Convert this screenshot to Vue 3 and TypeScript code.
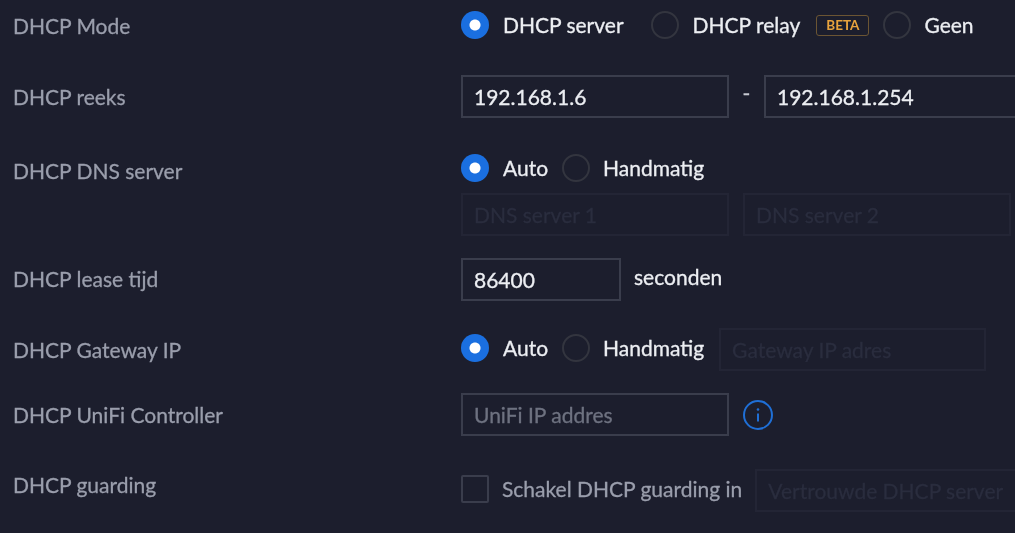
<template>
  <div class="settings">
    <div class="row row-mode">
      <div class="label">DHCP Mode</div>
      <div class="controls radios">
        <label class="radio checked"><i></i><span>DHCP server</span></label>
        <label class="radio gap-relay"><i></i><span>DHCP relay</span></label>
        <span class="beta">BETA</span>
        <label class="radio"><i></i><span>Geen</span></label>
      </div>
    </div>

    <div class="row row-range">
      <div class="label">DHCP reeks</div>
      <div class="controls inline">
        <input class="field" value="192.168.1.6" />
        <span class="dash">-</span>
        <input class="field" value="192.168.1.254" />
      </div>
    </div>

    <div class="row row-dns">
      <div class="label">DHCP DNS server</div>
      <div class="controls">
        <div class="radios">
          <label class="radio checked"><i></i><span>Auto</span></label>
          <label class="radio tight"><i></i><span>Handmatig</span></label>
        </div>
        <div class="dns-fields">
          <input class="field off" placeholder="DNS server 1" disabled />
          <input class="field off" placeholder="DNS server 2" disabled />
        </div>
      </div>
    </div>

    <div class="row row-lease">
      <div class="label">DHCP lease tijd</div>
      <div class="controls inline">
        <input class="field short" value="86400" />
        <span class="unit">seconden</span>
      </div>
    </div>

    <div class="row row-gateway">
      <div class="label">DHCP Gateway IP</div>
      <div class="controls radios">
        <label class="radio checked"><i></i><span>Auto</span></label>
        <label class="radio tight"><i></i><span>Handmatig</span></label>
        <input class="field off gateway" placeholder="Gateway IP adres" disabled />
      </div>
    </div>

    <div class="row row-controller">
      <div class="label">DHCP UniFi Controller</div>
      <div class="controls inline">
        <input class="field" placeholder="UniFi IP addres" />
        <svg class="info" width="32" height="32" viewBox="0 0 32 32" fill="none">
          <circle cx="16" cy="16" r="14" stroke="#1f6fd6" stroke-width="2" />
          <circle cx="16" cy="10.5" r="1.3" fill="#1f6fd6" />
          <path d="M16 14.5v8" stroke="#1f6fd6" stroke-width="2" />
        </svg>
      </div>
    </div>

    <div class="row row-guard">
      <div class="label">DHCP guarding</div>
      <div class="controls radios">
        <label class="check"><i></i><span>Schakel DHCP guarding in</span></label>
        <input class="field off trusted" placeholder="Vertrouwde DHCP server" disabled />
      </div>
    </div>
  </div>
</template>

<script setup lang="ts">
</script>

<style>
html,
body {
  background: #1c1e2d;
  overflow: hidden;
}
</style>

<style scoped>
.settings {
  width: 1015px;
  height: 533px;
  overflow: hidden;
  box-sizing: border-box;
  padding: 4px 0 0 13px;
  background: #1c1e2d;
  font-family: Lato, "Open Sans", sans-serif;
  font-size: 21px;
  -webkit-text-stroke: 0.3px currentColor;
  color: #eceef2;
  filter: blur(0.6px);
}

.row {
  display: grid;
  grid-template-columns: 448px 600px;
  align-items: start;
}

.label {
  color: #9a9eac;
  line-height: 28px;
}

.row-mode { height: 71px; }
.row-mode .label { padding-top: 8px; }
.row-mode .controls { padding-top: 7px; }
.row-range { height: 79px; }
.row-range .label { padding-top: 8px; }
.row-dns { height: 104px; }
.row-dns .label { padding-top: 3px; }
.row-lease { height: 70px; }
.row-lease .label { padding-top: 7px; }
.row-gateway { height: 65px; }
.row-gateway .label { padding-top: 8px; }
.row-gateway .radio { margin-bottom: 4px; }
.row-controller { height: 77px; }
.row-controller .label { padding-top: 8px; }
.row-guard { margin-top: -1px; }
.row-guard .label { padding-top: 2px; }

.radios {
  display: flex;
  align-items: center;
}

.inline {
  display: flex;
  align-items: center;
}

.radio,
.check {
  display: flex;
  align-items: center;
  line-height: 28px;
  white-space: nowrap;
}

.radio i {
  box-sizing: border-box;
  width: 28px;
  height: 28px;
  margin-right: 13px;
  border: 2px solid #33353f;
  border-radius: 50%;
}

.radio.checked i {
  margin-right: 14px;
  border: 0;
  background: radial-gradient(circle, #fff 0 5px, #1a6fe0 6px);
}

.gap-relay { margin-left: 27px; }
.gap-relay i { margin-right: 14px; }
.tight { margin-left: 14px; }

.beta {
  box-sizing: border-box;
  height: 21px;
  margin: 0 14px 0 16px;
  padding: 0 9px;
  border: 1px solid #6b5533;
  border-radius: 3px;
  color: #e8a33d;
  font-size: 13.5px;
  font-weight: 700;
  line-height: 19px;
  -webkit-text-stroke: 0;
}

.field {
  box-sizing: border-box;
  flex: none;
  width: 268px;
  height: 43px;
  padding: 0 11px;
  border: 2px solid #3a3d4c;
  border-radius: 0;
  outline: none;
  background: transparent;
  color: #eceef2;
  font: inherit;
}

.field::placeholder {
  color: #6e7280;
  opacity: 1;
}

.field.off {
  border-color: #232535;
}

.field.off::placeholder {
  color: #2a2d3e;
}

.dash {
  width: 35px;
  padding-bottom: 8px;
  text-align: center;
  color: #c8cad2;
}

.dns-fields {
  display: flex;
  gap: 14px;
  margin-top: 11px;
}

.short {
  width: 160px;
}

.unit {
  margin-left: 13px;
  padding-bottom: 7px;
}

.gateway {
  width: 267px;
  margin-left: 15px;
}

.info {
  margin-left: 13px;
}

.check {
  padding-bottom: 4px;
  color: #9a9eac;
}

.check i {
  box-sizing: border-box;
  width: 28px;
  height: 28px;
  margin-right: 13px;
  border: 2px solid #3a3d4c;
  border-radius: 2px;
}

.trusted {
  margin-left: 13px;
}
</style>
